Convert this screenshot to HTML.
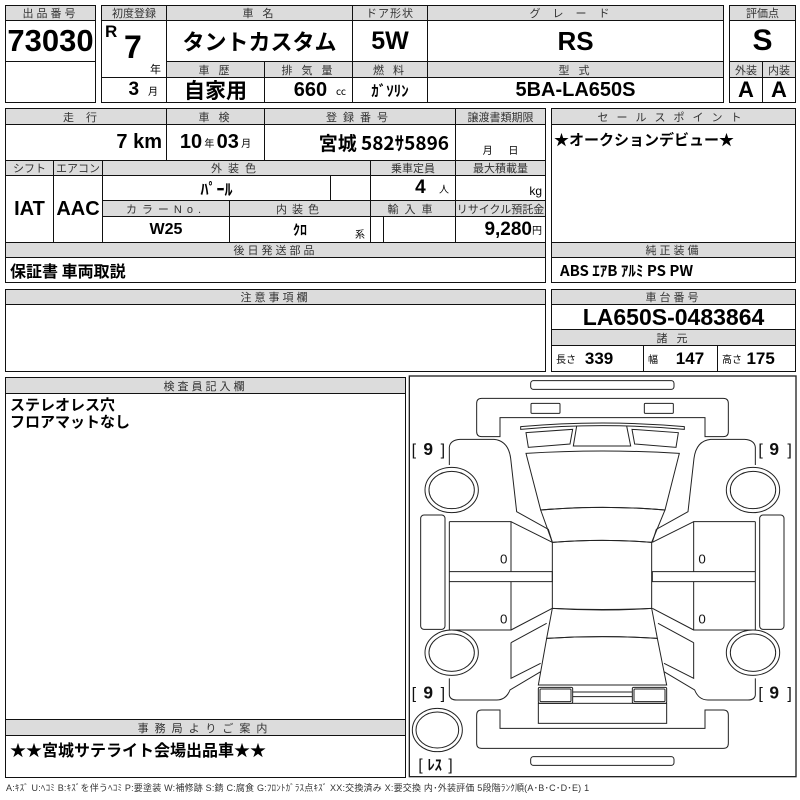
<!DOCTYPE html>
<html><head><meta charset="utf-8"><style>
body{margin:0;width:800px;height:800px;background:#fff;position:relative;overflow:hidden;font-family:"Liberation Sans Narrow","Liberation Sans","Noto Sans CJK JP",sans-serif;}
.c{position:absolute;box-sizing:border-box;border:1px solid #111;display:flex;align-items:center;justify-content:center;white-space:nowrap;color:#000;}
.h{background:#dcdcdc;font-family:"Liberation Sans","Noto Sans CJK JP",sans-serif;font-size:11px;color:#333;letter-spacing:3px;font-weight:normal;}
.b{font-weight:bold;}
.j{font-family:"Noto Sans CJK JP",sans-serif;}
.s{font-size:10px;font-weight:normal;font-family:"Noto Sans CJK JP",sans-serif;}
</style></head><body>

<!-- 出品番号 -->
<div class="c h" style="left:5px;top:5px;width:91px;height:16px">出品番号</div>
<div class="c b" style="left:5px;top:20px;width:91px;height:42px;font-size:31px">73030</div>
<div class="c" style="left:5px;top:61px;width:91px;height:42px"></div>

<!-- block 2 -->
<div class="c h" style="left:101px;top:5px;width:66px;height:16px;letter-spacing:0">初度登録</div>
<div class="c h" style="left:166px;top:5px;width:187px;height:16px">車 名</div>
<div class="c h" style="left:352px;top:5px;width:76px;height:16px;letter-spacing:1px">ドア形状</div>
<div class="c h" style="left:427px;top:5px;width:297px;height:16px;letter-spacing:12px">グレード</div>
<div class="c" style="left:101px;top:20px;width:66px;height:58px"></div>
<div style="position:absolute;left:105px;top:22px;font-size:17px;font-weight:bold">R</div>
<div style="position:absolute;left:124px;top:29px;font-size:32px;font-weight:bold">7</div>
<div class="s" style="position:absolute;left:150px;top:61px;font-size:11px">年</div>
<div class="c b j" style="left:166px;top:20px;width:187px;height:42px;font-size:22px">タントカスタム</div>
<div class="c b" style="left:352px;top:20px;width:76px;height:42px;font-size:25px">5W</div>
<div class="c b" style="left:427px;top:20px;width:297px;height:42px;font-size:26px">RS</div>
<div class="c h" style="left:166px;top:61px;width:99px;height:17px">車 歴</div>
<div class="c h" style="left:264px;top:61px;width:89px;height:17px">排 気 量</div>
<div class="c h" style="left:352px;top:61px;width:76px;height:17px">燃 料</div>
<div class="c h" style="left:427px;top:61px;width:297px;height:17px">型 式</div>
<div class="c" style="left:101px;top:77px;width:66px;height:26px;justify-content:flex-end;padding-right:8px"><b style="font-size:19px">3</b>&nbsp;&nbsp;<span class="s">月</span></div>
<div class="c b j" style="left:166px;top:77px;width:99px;height:26px;font-size:21px">自家用</div>
<div class="c" style="left:264px;top:77px;width:89px;height:26px;justify-content:flex-end;padding-right:6px"><b style="font-size:20px">660</b>&nbsp;&nbsp;<span class="s">cc</span></div>
<div class="c b j" style="left:352px;top:77px;width:76px;height:26px;font-size:15px">ｶﾞｿﾘﾝ</div>
<div class="c b" style="left:427px;top:77px;width:297px;height:26px;font-size:20px">5BA-LA650S</div>

<!-- 評価点 -->
<div class="c h" style="left:729px;top:5px;width:67px;height:16px;letter-spacing:0">評価点</div>
<div class="c b" style="left:729px;top:20px;width:67px;height:42px;font-size:30px">S</div>
<div class="c h" style="left:729px;top:61px;width:34px;height:17px;letter-spacing:0">外装</div>
<div class="c h" style="left:762px;top:61px;width:34px;height:17px;letter-spacing:0">内装</div>
<div class="c b" style="left:729px;top:77px;width:34px;height:26px;font-size:22px">A</div>
<div class="c b" style="left:762px;top:77px;width:34px;height:26px;font-size:22px">A</div>

<!-- middle block -->
<div class="c h" style="left:5px;top:108px;width:162px;height:17px;letter-spacing:12px">走行</div>
<div class="c h" style="left:166px;top:108px;width:99px;height:17px">車 検</div>
<div class="c h" style="left:264px;top:108px;width:192px;height:17px;letter-spacing:6px">登録番号</div>
<div class="c h" style="left:455px;top:108px;width:91px;height:17px;letter-spacing:0">譲渡書類期限</div>
<div class="c" style="left:5px;top:124px;width:162px;height:37px;justify-content:flex-end;padding-right:4px"><b style="font-size:20px">7 km</b></div>
<div class="c" style="left:166px;top:124px;width:99px;height:37px"><b style="font-size:20px">10</b><span class="s">&nbsp;年&nbsp;</span><b style="font-size:20px">03</b><span class="s">&nbsp;月</span></div>
<div class="c b j" style="left:264px;top:124px;width:192px;height:37px;font-size:19px;justify-content:flex-end;padding-right:6px">宮城 582ｻ5896</div>
<div class="c" style="left:455px;top:124px;width:91px;height:37px;align-items:flex-end;padding-bottom:3px"><span class="s">月&nbsp;&nbsp;&nbsp;&nbsp;&nbsp;&nbsp;&nbsp;日</span></div>

<div class="c h" style="left:5px;top:160px;width:49px;height:16px;letter-spacing:0">シフト</div>
<div class="c h" style="left:53px;top:160px;width:50px;height:16px;letter-spacing:0">エアコン</div>
<div class="c h" style="left:102px;top:160px;width:269px;height:16px;letter-spacing:6px">外装色</div>
<div class="c h" style="left:370px;top:160px;width:86px;height:16px;letter-spacing:0">乗車定員</div>
<div class="c h" style="left:455px;top:160px;width:91px;height:16px;letter-spacing:0">最大積載量</div>
<div class="c b" style="left:5px;top:175px;width:49px;height:68px;font-size:20px">IAT</div>
<div class="c b" style="left:53px;top:175px;width:50px;height:68px;font-size:20px">AAC</div>
<div class="c b j" style="left:102px;top:175px;width:229px;height:26px;font-size:16px">ﾊﾟｰﾙ</div>
<div class="c" style="left:330px;top:175px;width:41px;height:26px"></div>
<div class="c" style="left:370px;top:175px;width:86px;height:26px;justify-content:flex-end;padding-right:6px"><b style="font-size:19px">4</b>&nbsp;&nbsp;&nbsp;<span class="s">人</span></div>
<div class="c" style="left:455px;top:175px;width:91px;height:26px;justify-content:flex-end;align-items:flex-end;padding-right:3px;padding-bottom:2px;font-size:12px">kg</div>
<div class="c h" style="left:102px;top:200px;width:128px;height:17px;letter-spacing:5px">カラーNo.</div>
<div class="c h" style="left:229px;top:200px;width:142px;height:17px;letter-spacing:5px">内装色</div>
<div class="c h" style="left:370px;top:200px;width:86px;height:17px;letter-spacing:6px">輸入車</div>
<div class="c h" style="left:455px;top:200px;width:91px;height:17px;letter-spacing:0">リサイクル預託金</div>
<div class="c b" style="left:102px;top:216px;width:128px;height:27px;font-size:16px">W25</div>
<div class="c b j" style="left:229px;top:216px;width:142px;height:27px;font-size:14px">ｸﾛ</div>
<div class="s" style="position:absolute;left:355px;top:226px">系</div>
<div class="c" style="left:370px;top:216px;width:14px;height:27px"></div>
<div class="c" style="left:383px;top:216px;width:73px;height:27px"></div>
<div class="c" style="left:455px;top:216px;width:91px;height:27px;justify-content:flex-end;padding-right:3px"><b style="font-size:19px">9,280</b><span class="s">円</span></div>

<div class="c h" style="left:5px;top:242px;width:541px;height:16px">後日発送部品</div>
<div class="c b j" style="left:5px;top:257px;width:541px;height:26px;font-size:16px;justify-content:flex-start;padding-left:4px">保証書 車両取説</div>

<!-- sales point -->
<div class="c h" style="left:551px;top:108px;width:245px;height:17px;letter-spacing:8px">セールスポイント</div>
<div class="c" style="left:551px;top:124px;width:245px;height:119px;align-items:flex-start;justify-content:flex-start;padding:4px 2px"><b class="j" style="font-size:15px">★オークションデビュー★</b></div>
<div class="c h" style="left:551px;top:242px;width:245px;height:16px">純正装備</div>
<div class="c b j" style="left:551px;top:257px;width:245px;height:26px;font-size:15px;justify-content:flex-start;padding-left:8px">ABS ｴｱB ｱﾙﾐ PS PW</div>

<!-- 注意事項 -->
<div class="c h" style="left:5px;top:289px;width:541px;height:16px">注意事項欄</div>
<div class="c" style="left:5px;top:304px;width:541px;height:68px"></div>
<div class="c h" style="left:551px;top:289px;width:245px;height:16px">車台番号</div>
<div class="c b" style="left:551px;top:304px;width:245px;height:26px;font-size:23px">LA650S-0483864</div>
<div class="c h" style="left:551px;top:329px;width:245px;height:17px">諸 元</div>
<div class="c" style="left:551px;top:345px;width:93px;height:27px;justify-content:flex-start;padding-left:4px"><span class="s">長さ</span>&nbsp;&nbsp;<b style="font-size:17px">339</b></div>
<div class="c" style="left:643px;top:345px;width:75px;height:27px;justify-content:flex-start;padding-left:4px"><span class="s">幅</span>&nbsp;&nbsp;&nbsp;&nbsp;<b style="font-size:17px">147</b></div>
<div class="c" style="left:717px;top:345px;width:79px;height:27px;justify-content:flex-start;padding-left:4px"><span class="s">高さ</span>&nbsp;<b style="font-size:17px">175</b></div>

<!-- 検査員 -->
<div class="c h" style="left:5px;top:377px;width:401px;height:17px">検査員記入欄</div>
<div class="c" style="left:5px;top:393px;width:401px;height:327px;align-items:flex-start;justify-content:flex-start;padding:2px 4px"><b class="j" style="font-size:15px;line-height:17px">ステレオレス穴<br>フロアマットなし</b></div>
<div class="c h" style="left:5px;top:719px;width:401px;height:17px;letter-spacing:6px">事務局よりご案内</div>
<div class="c" style="left:5px;top:735px;width:401px;height:43px;align-items:flex-start;justify-content:flex-start;padding:1px 4px"><b class="j" style="font-size:16px">★★宮城サテライト会場出品車★★</b></div>

<div style="position:absolute;left:6px;top:781px;font-size:9px;color:#333;font-family:'Liberation Sans','Noto Sans CJK JP',sans-serif;white-space:nowrap;letter-spacing:0.2px">A:ｷｽﾞ U:ﾍｺﾐ B:ｷｽﾞを伴うﾍｺﾐ P:要塗装 W:補修跡 S:錆 C:腐食 G:ﾌﾛﾝﾄｶﾞﾗｽ点ｷｽﾞ XX:交換済み X:要交換 内･外装評価 5段階ﾗﾝｸ順(A･B･C･D･E) 1</div>

<!-- car diagram -->
<svg style="position:absolute;left:400px;top:370px" width="400" height="420" viewBox="0 0 1200 1260">
<g fill="none" stroke="#222" stroke-width="3">
<rect x="28" y="18" width="1160" height="1202" stroke-width="4"/>
<rect x="392" y="32" width="430" height="26" rx="8"/>
<rect x="392" y="1160" width="430" height="26" rx="8"/>
<path d="M230,100 q0-15 15-15 H970 q15 0 15 15 V185 q0 15 -15 15 H915 V143 H300 V200 H245 q-15 0 -15-15 Z"/>
<rect x="393" y="100" width="87" height="30" rx="3"/>
<rect x="733" y="100" width="87" height="30" rx="3"/>
<path d="M230,1035 q0-15 15-15 H300 V1075 H915 V1020 H970 q15 0 15 15 V1120 q0 15 -15 15 H245 q-15 0 -15 -15 Z"/>
<path d="M362,170 Q607,148 853,170 L853,178 Q607,156 362,178 Z"/>
<path d="M530,168 L520,228 L692,228 L680,168"/>
<path d="M378,188 L518,178 L510,222 L385,232 Z"/>
<path d="M696,178 L835,188 L828,232 L704,222 Z"/>
<path d="M378,250 Q607,236 838,250 L795,420 Q607,404 422,420 Z"/>
<path d="M422,420 Q607,404 795,420 L755,517 Q607,505 457,517 Z"/>
<path d="M457,517 Q607,505 755,517 L755,715 Q607,725 457,715 Z"/>
<path d="M457,715 Q607,722 755,715 L772,805 Q607,795 440,805 Z"/>
<path d="M440,805 Q607,795 772,805 L800,945 L415,945 Z"/>
<rect x="415" y="1000" width="385" height="60"/>
<rect x="415" y="952" width="103" height="48" rx="4"/>
<rect x="420" y="957" width="93" height="38" rx="3"/>
<rect x="697" y="952" width="103" height="48" rx="4"/>
<rect x="702" y="957" width="93" height="38" rx="3"/>
<path d="M518,966 H697 M518,980 H697"/>
<g id="side">
<path d="M148,285 V232 Q150,210 180,208 H282 Q325,212 332,265 L350,425 L445,478 L457,517"/>
<rect x="62" y="435" width="73" height="343" rx="10"/>
<path d="M148,455 H333 V605 H148 M148,635 H333 V780 H148 M333,455 L457,517 M333,605 H457 V635 H333 M333,780 L457,715 M333,635 V780"/>
<path d="M148,455 V780"/>
<path d="M333,818 L440,760 M333,818 V925 L422,880 M148,925 V975 Q150,990 170,990 H290 Q318,990 330,960 L422,905"/>
<ellipse cx="155" cy="360" rx="80" ry="68"/><ellipse cx="155" cy="360" rx="68" ry="56"/>
<ellipse cx="155" cy="848" rx="80" ry="68"/><ellipse cx="155" cy="848" rx="68" ry="56"/>
</g>
<use href="#side" transform="translate(1214,0) scale(-1,1)"/>
<ellipse cx="112" cy="1080" rx="75" ry="65"/><ellipse cx="112" cy="1080" rx="64" ry="54"/>
</g>
<g font-family="Liberation Sans Narrow, Liberation Sans, Noto Sans CJK JP, sans-serif" fill="#111">
<text x="35" y="255" font-size="48">[</text><text x="70" y="255" font-size="52" font-weight="bold">9</text><text x="122" y="255" font-size="48">]</text>
<text x="1075" y="255" font-size="48">[</text><text x="1108" y="255" font-size="52" font-weight="bold">9</text><text x="1162" y="255" font-size="48">]</text>
<text x="35" y="985" font-size="48">[</text><text x="70" y="985" font-size="52" font-weight="bold">9</text><text x="122" y="985" font-size="48">]</text>
<text x="1075" y="985" font-size="48">[</text><text x="1108" y="985" font-size="52" font-weight="bold">9</text><text x="1162" y="985" font-size="48">]</text>
<text x="55" y="1200" font-size="46">[</text><text x="82" y="1200" font-size="44" font-weight="bold" font-family="Noto Sans CJK JP, sans-serif">ﾚｽ</text><text x="145" y="1200" font-size="46">]</text>
<text x="300" y="580" font-size="40">0</text><text x="300" y="760" font-size="40">0</text>
<text x="895" y="580" font-size="40">0</text><text x="895" y="760" font-size="40">0</text>
</g>
</svg>
</body></html>
